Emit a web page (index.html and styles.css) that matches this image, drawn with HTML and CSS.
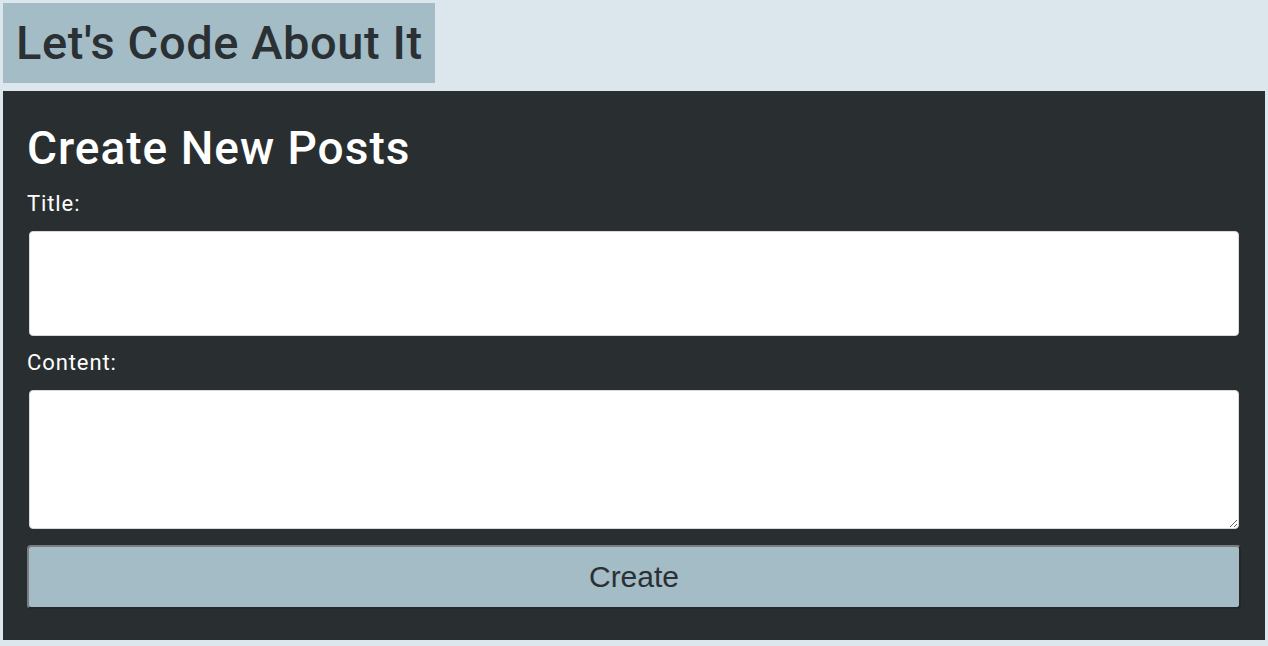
FILE: index.html
```html
<!DOCTYPE html>
<html lang="en">
<head>
<meta charset="utf-8">
<title>Let's Code About It</title>
<link rel="stylesheet" href="styles.css">
</head>
<body>
<header class="site-header">
  <h1 class="site-title">Let's Code About It</h1>
</header>
<main class="panel">
  <h2 class="panel-title">Create New Posts</h2>
  <form class="post-form">
    <label class="field-label" for="title">Title:</label>
    <input class="field-input" id="title" type="text">
    <label class="field-label" for="content">Content:</label>
    <textarea class="field-area" id="content"></textarea>
    <button class="create-btn" type="button">Create</button>
  </form>
</main>
</body>
</html>
```
FILE: styles.css
```css
html, body {
  margin: 0;
  padding: 0;
}
body {
  background: #dce6ed;
  padding: 3px;
  font-family: "Roboto", "Inter", sans-serif;
  height: 646px;
  box-sizing: border-box;
  overflow: hidden;
}
.site-header {
  display: flex;
}
.site-title {
  margin: 0;
  background: #a3bcc6;
  color: #2a3033;
  font-size: 47px;
  font-weight: 500;
  line-height: 80px;
  height: 80px;
  padding: 0 12px 0 13px;
  letter-spacing: 0.6px;
}
.panel {
  margin-top: 8px;
  background: #292f31;
  padding: 24px 24px 31px;
}
.panel-title {
  margin: 0 0 9px;
  color: #ffffff;
  font-size: 46px;
  font-weight: 500;
  line-height: 67px;
  letter-spacing: 1px;
}
.post-form {
  display: flex;
  flex-direction: column;
}
.field-label {
  color: #ffffff;
  font-size: 22px;
  line-height: 26px;
  margin: 0 0 14px;
  letter-spacing: 0.9px;
}
.field-input,
.field-area {
  margin: 0 2px;
  border: 1px solid #d8d8d8;
  border-radius: 4px;
  background: #ffffff;
  box-sizing: border-box;
}
.field-input {
  height: 105px;
  margin-bottom: 14px;
}
.field-area {
  height: 139px;
  resize: vertical;
  margin-bottom: 16px;
}
.create-btn {
  height: 64px;
  background: #a3bcc6;
  color: #2a3033;
  font-family: "Liberation Sans", Arial, sans-serif;
  font-size: 30px;
  border-style: solid;
  border-width: 2px;
  border-color: #7a7d7e #242829 #242829 #7a7d7e;
  border-radius: 4px;
}
```
